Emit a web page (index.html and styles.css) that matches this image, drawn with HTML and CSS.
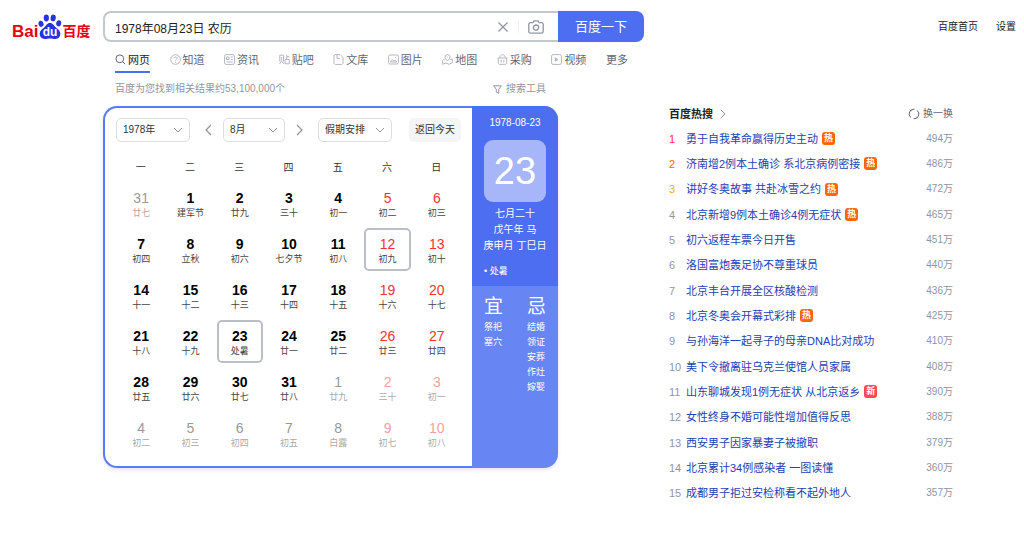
FILE: index.html
```html
<!DOCTYPE html>
<html lang="zh-CN">
<head>
<meta charset="utf-8">
<meta name="viewport" content="width=device-width, initial-scale=1">
<title>1978年08月23日 农历_百度搜索</title>
<link rel="stylesheet" href="styles.css">
</head>
<body>
<header class="header">
  <a class="logo" href="#" aria-label="百度">
    <span class="logo-text">Bai</span>
    <svg class="logo-paw" viewBox="0 0 24 26" aria-hidden="true">
      <g fill="#2932e1">
        <ellipse cx="3" cy="9.800" rx="2.500" ry="3.100" transform="rotate(-12 3 9.800)"/>
        <ellipse cx="8.300" cy="4" rx="2.600" ry="3.400"/>
        <ellipse cx="15.200" cy="4" rx="2.600" ry="3.400" transform="rotate(8 15.200 4)"/>
        <ellipse cx="20.700" cy="9.300" rx="2.500" ry="3.100" transform="rotate(10 20.700 9.300)"/>
        <path d="M12 9c-3 0-3.800 2.600-5.600 4.300-2.300 2-4.700 3.400-4.700 6.400 0 3.200 2.200 5.200 5 5.200 2 0 3.300-.5 5.300-.5s3.300.5 5.300.5c2.900 0 5-2 5-5.200 0-3-2.500-4.400-4.700-6.400C15.800 11.600 15 9 12 9z"/>
      </g>
      <text class="logo-du" x="12" y="22" text-anchor="middle">du</text>
    </svg>
    <span class="logo-cn">百度</span>
  </a>
  <form class="search">
    <div class="search-box">
      <input class="search-input" type="text" aria-label="搜索" value="1978年08月23日 农历">
      <button class="icon-btn" type="button" aria-label="清空">
        <svg width="12" height="12" viewBox="0 0 12 12"><path d="M1.500 1.500l9 9M10.500 1.500l-9 9"/></svg>
      </button>
      <span class="divider"></span>
      <button class="icon-btn" type="button" aria-label="按图片搜索">
        <svg width="16" height="14" viewBox="0 0 16 14"><path d="M5 2.700L6 .8h4l1 1.900h2.500c1 0 1.700.7 1.700 1.700v7c0 1-.7 1.700-1.700 1.700h-11C1.500 13.100.8 12.400.8 11.400v-7c0-1 .7-1.700 1.700-1.700z"/><circle cx="8" cy="7.600" r="2.600"/></svg>
      </button>
    </div>
    <button class="search-submit" type="submit">百度一下</button>
  </form>
  <nav class="user-nav">
    <a href="#">百度首页</a>
    <a href="#">设置</a>
  </nav>
</header>

<nav class="tabs">
  <a class="tab tab-active" href="#"><svg viewBox="0 0 11 11"><circle cx="4.800" cy="4.800" r="3.900"/><path d="M7.700 7.700l2.500 2.500"/></svg>网页</a>
  <a class="tab" href="#"><svg viewBox="0 0 11 11"><circle cx="5.500" cy="5.500" r="4.800"/><path d="M3.900 4.400c0-2 3.200-2 3.200-.1 0 1.200-1.600 1.200-1.600 2.400M5.500 7.700v1"/></svg>知道</a>
  <a class="tab" href="#"><svg viewBox="0 0 11 11"><rect x=".6" y=".6" width="9.800" height="9.800" rx="1.500"/><path d="M2.500 3h2.500v2.500H2.500zM6.500 3h2.300M6.500 5.500h2.300M2.500 8h6.300"/></svg>资讯</a>
  <a class="tab" href="#"><svg viewBox="0 0 11 11"><path d="M.8 7.500V1.200h3.700v6.300M2.700 3v3.500L.6 10M3 7.500l1.800 2.400M7.800.8v4.500M7.800 2.700h2.700M6 5.500h4.200v4.300H6z"/></svg>贴吧</a>
  <a class="tab" href="#"><svg viewBox="0 0 11 11"><path d="M7 .6H2.500C1.600.6 1 1.200 1 2v7c0 .9.600 1.400 1.500 1.400h6C9.400 10.400 10 9.900 10 9V3.500L7.500.8M4 .8v3.500h3"/></svg>文库</a>
  <a class="tab" href="#"><svg viewBox="0 0 11 11"><rect x=".6" y="1" width="9.800" height="9" rx="1.400"/><path d="M2.300 8l2.200-2.300L6 7.200l1.200-1L8.800 8zM7 3.600h1"/></svg>图片</a>
  <a class="tab" href="#"><svg viewBox="0 0 11 11"><path d="M5.500 7C3.800 5.300 3 4.300 3 3.100a2.500 2.500 0 0 1 5 0C8 4.300 7.200 5.300 5.500 7zM2.700 5L.7 6.300v4L4 9l3 1.300 3.300-1.500V4.900L8.300 5.600M5.500 2.700v.8"/></svg>地图</a>
  <a class="tab" href="#"><svg viewBox="0 0 11 11"><path d="M.6 4h9.800M1.300 4v4.800c0 .9.500 1.500 1.400 1.500h5.600c.9 0 1.400-.6 1.400-1.500V4M2.800 3.800C3 1.800 4 .7 5.500.7s2.500 1.100 2.700 3.100M4.200 5.700v2.800M6.800 5.700v2.800"/></svg>采购</a>
  <a class="tab" href="#"><svg viewBox="0 0 11 11"><rect x=".6" y=".6" width="9.800" height="9.800" rx="1.500"/><path d="M4.300 3.800v3.400L7 5.500z" fill="currentColor"/></svg>视频</a>
  <a class="tab" href="#">更多</a>
</nav>

<div class="page">
  <div class="info">
    <span>百度为您找到相关结果约53,100,000个</span>
    <button class="tools" type="button"><svg width="9" height="9" viewBox="0 0 9 9"><path d="M.7.800h7.600L5.700 4.300v4L3.300 7V4.300z"/></svg>搜索工具</button>
  </div>

  <main class="calendar">
    <section class="month">
      <div class="toolbar">
        <select class="pick" aria-label="年份"><option>1978年</option></select>
        <button class="step step-prev" type="button" aria-label="上个月"><svg width="7" height="12" viewBox="0 0 7 12"><path d="M6 1L1 6l5 5"/></svg></button>
        <select class="pick pick-short" aria-label="月份"><option>8月</option></select>
        <button class="step step-next" type="button" aria-label="下个月"><svg width="7" height="12" viewBox="0 0 7 12"><path d="M1 1l5 5-5 5"/></svg></button>
        <select class="pick" aria-label="假期安排"><option>假期安排</option></select>
        <button class="today" type="button">返回今天</button>
      </div>
      <table class="days">
        <thead>
          <tr><th>一</th><th>二</th><th>三</th><th>四</th><th>五</th><th>六</th><th>日</th></tr>
        </thead>
        <tbody>
          <tr>
            <td class="out"><div class="day"><b>31</b><i>廿七</i></div></td>
            <td><div class="day"><b>1</b><i>建军节</i></div></td>
            <td><div class="day"><b>2</b><i>廿九</i></div></td>
            <td><div class="day"><b>3</b><i>三十</i></div></td>
            <td><div class="day"><b>4</b><i>初一</i></div></td>
            <td class="rest"><div class="day"><b>5</b><i>初二</i></div></td>
            <td class="rest"><div class="day"><b>6</b><i>初三</i></div></td>
          </tr>
          <tr>
            <td><div class="day"><b>7</b><i>初四</i></div></td>
            <td><div class="day"><b>8</b><i>立秋</i></div></td>
            <td><div class="day"><b>9</b><i>初六</i></div></td>
            <td><div class="day"><b>10</b><i>七夕节</i></div></td>
            <td><div class="day"><b>11</b><i>初八</i></div></td>
            <td class="rest"><div class="day day-marked"><b>12</b><i>初九</i></div></td>
            <td class="rest"><div class="day"><b>13</b><i>初十</i></div></td>
          </tr>
          <tr>
            <td><div class="day"><b>14</b><i>十一</i></div></td>
            <td><div class="day"><b>15</b><i>十二</i></div></td>
            <td><div class="day"><b>16</b><i>十三</i></div></td>
            <td><div class="day"><b>17</b><i>十四</i></div></td>
            <td><div class="day"><b>18</b><i>十五</i></div></td>
            <td class="rest"><div class="day"><b>19</b><i>十六</i></div></td>
            <td class="rest"><div class="day"><b>20</b><i>十七</i></div></td>
          </tr>
          <tr>
            <td><div class="day"><b>21</b><i>十八</i></div></td>
            <td><div class="day"><b>22</b><i>十九</i></div></td>
            <td><div class="day day-marked"><b>23</b><i>处暑</i></div></td>
            <td><div class="day"><b>24</b><i>廿一</i></div></td>
            <td><div class="day"><b>25</b><i>廿二</i></div></td>
            <td class="rest"><div class="day"><b>26</b><i>廿三</i></div></td>
            <td class="rest"><div class="day"><b>27</b><i>廿四</i></div></td>
          </tr>
          <tr>
            <td><div class="day"><b>28</b><i>廿五</i></div></td>
            <td><div class="day"><b>29</b><i>廿六</i></div></td>
            <td><div class="day"><b>30</b><i>廿七</i></div></td>
            <td><div class="day"><b>31</b><i>廿八</i></div></td>
            <td class="out"><div class="day"><b>1</b><i>廿九</i></div></td>
            <td class="out rest"><div class="day"><b>2</b><i>三十</i></div></td>
            <td class="out rest"><div class="day"><b>3</b><i>初一</i></div></td>
          </tr>
          <tr>
            <td class="out"><div class="day"><b>4</b><i>初二</i></div></td>
            <td class="out"><div class="day"><b>5</b><i>初三</i></div></td>
            <td class="out"><div class="day"><b>6</b><i>初四</i></div></td>
            <td class="out"><div class="day"><b>7</b><i>初五</i></div></td>
            <td class="out"><div class="day"><b>8</b><i>白露</i></div></td>
            <td class="out rest"><div class="day"><b>9</b><i>初七</i></div></td>
            <td class="out rest"><div class="day"><b>10</b><i>初八</i></div></td>
          </tr>
        </tbody>
      </table>
    </section>
    <aside class="almanac">
      <div class="almanac-date">
        <div>1978-08-23</div>
        <div class="big-day">23</div>
        <div>七月二十</div>
        <div>戊午年 马</div>
        <div>庚申月 丁巳日</div>
        <div class="term">• 处暑</div>
      </div>
      <div class="almanac-advice">
        <div><h3>宜</h3><p>祭祀</p><p>塞穴</p></div>
        <div><h3>忌</h3><p>结婚</p><p>领证</p><p>安葬</p><p>作灶</p><p>嫁娶</p></div>
      </div>
    </aside>
  </main>

  <aside class="hot">
    <div class="hot-head">
      <h2><a href="#">百度热搜<svg width="6" height="10" viewBox="0 0 6 10"><path d="M.8.800L5 5 .8 9.200"/></svg></a></h2>
      <button class="refresh" type="button"><svg width="12" height="12" viewBox="0 0 12 12"><path d="M2.800 9.600A4.800 4.800 0 0 1 6.500 1.200M9.200 2.400A4.800 4.800 0 0 1 5.500 10.800M2.300 1.800l1.200 1.400M9.700 10.200L8.500 8.800"/></svg>换一换</button>
    </div>
    <ol class="hot-list">
      <li><span class="rank rank-1">1</span><a href="#">勇于自我革命赢得历史主动</a><em>热</em><span class="heat">494万</span></li>
      <li><span class="rank rank-2">2</span><a href="#">济南增2例本土确诊 系北京病例密接</a><em>热</em><span class="heat">486万</span></li>
      <li><span class="rank rank-3">3</span><a href="#">讲好冬奥故事 共赴冰雪之约</a><em>热</em><span class="heat">472万</span></li>
      <li><span class="rank">4</span><a href="#">北京新增9例本土确诊4例无症状</a><em>热</em><span class="heat">465万</span></li>
      <li><span class="rank">5</span><a href="#">初六返程车票今日开售</a><span class="heat">451万</span></li>
      <li><span class="rank">6</span><a href="#">洛国富炮轰足协不尊重球员</a><span class="heat">440万</span></li>
      <li><span class="rank">7</span><a href="#">北京丰台开展全区核酸检测</a><span class="heat">436万</span></li>
      <li><span class="rank">8</span><a href="#">北京冬奥会开幕式彩排</a><em>热</em><span class="heat">425万</span></li>
      <li><span class="rank">9</span><a href="#">与孙海洋一起寻子的母亲DNA比对成功</a><span class="heat">410万</span></li>
      <li><span class="rank">10</span><a href="#">美下令撤离驻乌克兰使馆人员家属</a><span class="heat">408万</span></li>
      <li><span class="rank">11</span><a href="#">山东聊城发现1例无症状 从北京返乡</a><em class="new">新</em><span class="heat">390万</span></li>
      <li><span class="rank">12</span><a href="#">女性终身不婚可能性增加值得反思</a><span class="heat">388万</span></li>
      <li><span class="rank">13</span><a href="#">西安男子因家暴妻子被撤职</a><span class="heat">379万</span></li>
      <li><span class="rank">14</span><a href="#">北京累计34例感染者 一图读懂</a><span class="heat">360万</span></li>
      <li><span class="rank">15</span><a href="#">成都男子拒过安检称看不起外地人</a><span class="heat">357万</span></li>
    </ol>
  </aside>
</div>
</body>
</html>
```

FILE: styles.css
```css
* { box-sizing: border-box; }

body {
  margin: 0;
  background: #fff;
  color: #222;
  font: 10px/16px "Liberation Sans", "Noto Sans CJK SC", sans-serif;
}

a { color: inherit; text-decoration: none; }
button, input, select { font: inherit; color: inherit; margin: 0; }
button { border: 0; padding: 0; background: none; cursor: pointer; }
h2, h3, p, ol { margin: 0; padding: 0; font-weight: normal; }
svg { fill: none; stroke: currentColor; flex: none; }

/* Header */
.header {
  display: flex;
  align-items: flex-start;
  padding: 11px 8px 0 12px;
}
.logo {
  display: flex;
  align-items: flex-end;
  width: 91px;
  height: 29px;
  color: #e60012;
  font-weight: bold;
}
.logo-text { font-size: 17px; line-height: 17px; }
.logo-paw { width: 24px; height: 26px; stroke: none; }
.logo-du { fill: #fff; font-size: 12px; font-weight: bold; }
.logo-cn { font-size: 14px; line-height: 18px; }

.search {
  display: flex;
  flex: 0 1 541px;
  height: 31px;
}
.search-box {
  display: flex;
  flex: 1;
  align-items: center;
  min-width: 0;
  padding-right: 14px;
  border: 2px solid #c4c7ce;
  border-right: 0;
  border-radius: 8px 0 0 8px;
  color: #9195a3;
}
.search-input {
  flex: 1;
  min-width: 0;
  height: 100%;
  padding: 2px 10px 0;
  border: 0;
  outline: 0;
  background: none;
  color: #222;
  font-size: 12px;
}
.icon-btn { display: flex; stroke-width: 1.3; }
.divider {
  width: 1px;
  height: 12px;
  margin: 0 9px;
  background: #f0f0f3;
}
.search-submit {
  width: 86px;
  border-radius: 0 8px 8px 0;
  background: #4e6ef2;
  color: #fff;
  font-size: 13px;
}
.user-nav {
  display: flex;
  gap: 18px;
  margin-left: auto;
  padding-top: 8px;
}

/* Result categories */
.tabs {
  display: flex;
  justify-content: space-between;
  max-width: 513px;
  margin-left: 115px;
  color: #626675;
  font-size: 11px;
}
.tab {
  display: flex;
  align-items: center;
  gap: 2px;
  height: 31px;
  padding-top: 6px;
  border-bottom: 2px solid transparent;
}
.tab svg { width: 11px; height: 11px; color: #b4b7c1; }
.tab-active { border-color: #4e6ef2; color: #222; }
.tab-active svg { color: #626675; }

/* Page body */
.page {
  display: grid;
  grid-template-columns: minmax(0, 455px) minmax(0, 284px);
  column-gap: 111px;
  padding-left: 103px;
}
.info {
  grid-column: 1;
  display: flex;
  justify-content: space-between;
  height: 33px;
  padding: 8px 12px 0;
  color: #9195a3;
}
.tools {
  display: flex;
  align-items: center;
  gap: 4px;
  height: 16px;
}

/* Calendar */
.calendar {
  grid-column: 1;
  display: flex;
  align-self: start;
  border-radius: 14px;
  box-shadow: 0 2px 4px #e4e6ee;
}
.month {
  flex: 1;
  padding: 10px 11px 8px;
  border: 2px solid #5b7afa;
  border-right: 0;
  border-radius: 14px 0 0 14px;
}
.toolbar { display: flex; height: 24px; }
.pick {
  width: 74px;
  padding: 0 6px;
  border: 1px solid #dcdde3;
  border-radius: 5px;
  appearance: none;
  background: url("data:image/svg+xml,%3Csvg xmlns='http://www.w3.org/2000/svg' width='10' height='6' fill='none' stroke='%239195a3'%3E%3Cpath d='M1 1l4 4 4-4'/%3E%3C/svg%3E") no-repeat right 6px center #fff;
  color: #333;
}
.pick-short { width: 62px; }
.step {
  display: flex;
  align-items: center;
  justify-content: center;
  width: 33px;
  color: #9195a3;
}
.step-prev { padding-left: 3px; }
.step-next { padding-right: 5px; }
.step svg { stroke-width: 1.3; }
.today {
  width: 52px;
  margin-left: auto;
  border-radius: 5px;
  background: #f5f5f6;
  color: #333;
}
.days {
  width: 100%;
  margin-top: 11px;
  border-collapse: collapse;
  table-layout: fixed;
  text-align: center;
}
.days th { height: 29px; padding: 0; color: #333; font-weight: normal; }
.days td { padding: 0 1px 3px 2px; }
.day {
  padding: 6px 0 3px;
  border: 2px solid transparent;
  border-radius: 5px;
}
.day b {
  display: block;
  color: #000;
  font-size: 14px;
  font-weight: bold;
  line-height: 16px;
}
.day i {
  display: block;
  color: #444;
  font-size: 9px;
  font-style: normal;
  line-height: 14px;
  white-space: nowrap;
}
.day-marked { border-color: #bbbdc9; }
.rest b { color: #f73131; font-weight: normal; }
.out b { color: #999; font-weight: normal; }
.out i { color: #aaa; }
.out.rest b { color: #fba0a0; }

.almanac {
  display: flex;
  flex-direction: column;
  width: 86px;
  border-radius: 0 14px 14px 0;
  overflow: hidden;
  background: #6885f4;
  color: #fff;
}
.almanac-date {
  padding: 9px 0 7px;
  background: #4e6ef2;
  text-align: center;
  white-space: nowrap;
}
.big-day {
  margin: 9px 12px 4px;
  border-radius: 9px;
  background: #a6b6f8;
  font-size: 38px;
  line-height: 62px;
}
.term {
  margin-top: 9px;
  padding-left: 12px;
  font-size: 9px;
  text-align: left;
}
.almanac-advice {
  display: flex;
  justify-content: space-between;
  padding: 8px 12px;
  font-size: 9px;
  line-height: 15px;
}
.almanac-advice h3 { font-size: 19px; line-height: 26px; }

/* Hot searches */
.hot { grid-column: 2; grid-row: 2; }
.hot-head {
  display: flex;
  justify-content: space-between;
  height: 20px;
}
.hot-head h2 { font-size: 11px; font-weight: bold; line-height: 16px; }
.hot-head h2 a { display: flex; align-items: center; gap: 7px; }
.hot-head h2 svg { color: #9195a3; }
.refresh {
  display: flex;
  align-items: center;
  gap: 3px;
  height: 16px;
  color: #626675;
}
.hot-list {
  display: grid;
  grid-auto-rows: 1fr;
  min-height: 380px;
  list-style: none;
}
.hot-list li { display: flex; align-items: center; white-space: nowrap; }
.hot-list a { color: #2440b3; font-size: 11px; }
.hot-list em {
  width: 13px;
  height: 13px;
  margin-left: 4px;
  border-radius: 3px;
  background: #f60;
  color: #fff;
  font-size: 9px;
  font-style: normal;
  font-weight: bold;
  line-height: 13px;
  text-align: center;
}
.hot-list .new { background: #ff455b; }
.rank { width: 17px; color: #9195a3; font-size: 11px; }
.rank-1 { color: #fe2d46; }
.rank-2 { color: #f60; }
.rank-3 { color: #faa90e; }
.heat { margin-left: auto; color: #9195a3; }
```
